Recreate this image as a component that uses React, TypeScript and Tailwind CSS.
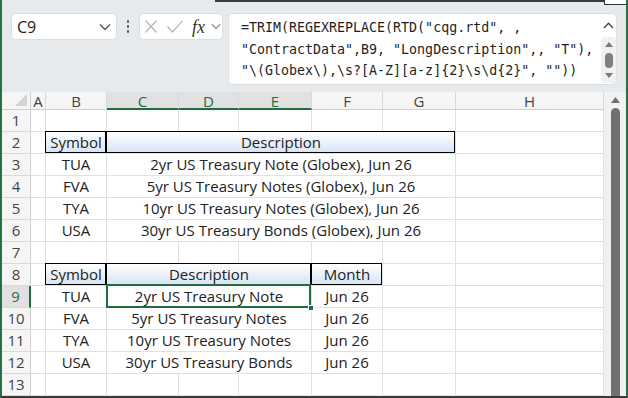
import React from "react"

const cellFont = "font-['Open_Sans',sans-serif]"

const colLetters = ["A", "B", "C", "D", "E", "F", "G", "H"]
const selectedCols = ["C", "D", "E"]

const table1 = [
  ["TUA", "2yr US Treasury Note (Globex), Jun 26"],
  ["FVA", "5yr US Treasury Notes (Globex), Jun 26"],
  ["TYA", "10yr US Treasury Notes (Globex), Jun 26"],
  ["USA", "30yr US Treasury Bonds (Globex), Jun 26"],
]

const table2 = [
  ["TUA", "2yr US Treasury Note", "Jun 26"],
  ["FVA", "5yr US Treasury Notes", "Jun 26"],
  ["TYA", "10yr US Treasury Notes", "Jun 26"],
  ["USA", "30yr US Treasury Bonds", "Jun 26"],
]

function Cell({ children, className = "" }: { children?: React.ReactNode; className?: string }) {
  return (
    <div
      className={`h-[22px] border-r border-b border-[#e1e1e1] bg-white flex items-center justify-center text-[15px] text-[#222] whitespace-nowrap ${className}`}
    >
      {children}
    </div>
  )
}

function HeadCell({ children, className = "" }: { children?: React.ReactNode; className?: string }) {
  return (
    <div
      className={`relative h-[22px] border-r border-b border-[#e1e1e1] bg-linear-to-b from-white to-[#d6e3f4] flex items-center justify-center text-[15px] text-[#222] ${className}`}
    >
      <div className="absolute -left-px -top-px right-0 bottom-0 border border-black pointer-events-none" />
      {children}
    </div>
  )
}

function RowNum({ n }: { n: number }) {
  const sel = n === 9
  return (
    <div
      className={`h-[22px] border-b border-[#dadada] flex items-center justify-center text-[15px] ${
        sel
          ? "bg-[#e1e1e1] text-[#1e6e42] border-r-2 border-r-[#1e6e42]"
          : "bg-[#f5f5f5] text-[#444] border-r border-r-[#cfcfcf]"
      }`}
    >
      {n}
    </div>
  )
}

function Empty({ count }: { count: number }) {
  return (
    <>
      {Array.from({ length: count }, (_, i) => (
        <Cell key={i} />
      ))}
    </>
  )
}

function NameBox() {
  return (
    <div className="w-[106px] h-[27px] bg-white rounded-[5px] border border-[#dcdfe2] flex items-center justify-between pl-[5px] pr-[5px]">
      <span className="font-['Open_Sans',sans-serif] text-[16px] text-[#222]">C9</span>
      <svg width="12" height="8" viewBox="0 0 12 8">
        <polyline points="1,1.5 6,6.5 11,1.5" fill="none" stroke="#555" strokeWidth="1.3" />
      </svg>
    </div>
  )
}

function FormulaButtons() {
  return (
    <div className="w-[84px] h-[27px] bg-white rounded-[5px] border border-[#dcdfe2] flex items-center pl-[5px]">
      <svg width="12" height="13" viewBox="0 0 12 13">
        <line x1="0.5" y1="0.5" x2="11.5" y2="12.5" stroke="#b5b5b5" strokeWidth="1.2" />
        <line x1="11.5" y1="0.5" x2="0.5" y2="12.5" stroke="#b5b5b5" strokeWidth="1.2" />
      </svg>
      <svg className="ml-[10px]" width="16" height="13" viewBox="0 0 16 13">
        <polyline points="0.5,6.5 5.5,12 15.5,0.8" fill="none" stroke="#b5b5b5" strokeWidth="1.2" />
      </svg>
      <span className="ml-[9px] font-['Liberation_Serif',serif] italic text-[18px] leading-none text-[#333] w-[15px]">
        fx
      </span>
      <svg className="ml-[4px]" width="10" height="7" viewBox="0 0 10 7">
        <polyline points="0.8,1.2 5,5.5 9.2,1.2" fill="none" stroke="#888" strokeWidth="1.1" />
      </svg>
    </div>
  )
}

function FormulaBox() {
  const lines = [
    '=TRIM(REGEXREPLACE(RTD("cqg.rtd", ,',
    '"ContractData",B9, "LongDescription",, "T"),',
    '"\\(Globex\\),\\s?[A-Z][a-z]{2}\\s\\d{2}", ""))',
  ]
  return (
    <div className="ml-[5px] w-[389px] h-[72px] bg-white rounded-[5px] border border-[#dcdfe2] flex">
      <div className="flex-1 pl-[12px] pt-[3px] font-['DejaVu_Sans_Mono',monospace] text-[13.3px] leading-[21.7px] text-[#1f1f1f]">
        {lines.map((l, i) => (
          <div key={i} className="whitespace-pre">
            {l}
          </div>
        ))}
      </div>
      <div className="w-[15px] flex flex-col items-center">
        <svg className="mt-[8px]" width="11" height="7" viewBox="0 0 11 7">
          <polyline points="1,6 5.5,1.3 10,6" fill="none" stroke="#444" strokeWidth="1.3" />
        </svg>
        <div className="mt-[8px] w-[15px] h-[46px] rounded-[4px] bg-[#f1f1f1] flex flex-col items-center">
          <svg className="mt-[5px]" width="8" height="5" viewBox="0 0 8 5">
            <polygon points="4,0 8,5 0,5" fill="#7a7a7a" />
          </svg>
          <div className="mt-[6px] w-[8px] h-[15px] rounded-full bg-[#808080]" />
          <svg className="mt-[5px]" width="8" height="5" viewBox="0 0 8 5">
            <polygon points="0,0 8,0 4,5" fill="#7a7a7a" />
          </svg>
        </div>
      </div>
    </div>
  )
}

export default function App() {
  return (
    <div className="w-[628px] h-[398px] overflow-hidden border-x-2 border-x-[#217346] border-b-2 border-b-[#3a3a3a] bg-[#e7eaed] flex flex-col">
      {/* formula bar */}
      <div className="h-[92px] shrink-0 flex flex-col">
        <div className="h-[5px] flex">
          <div className="w-[213px]" />
          <div className="flex-1 border-t-2 border-[#3a3a3a]" />
          <div className="w-[22px] h-[5px] bg-white border-l border-b border-[#333]" />
        </div>
        <div className="flex items-start pl-[9px] pt-[8px]">
          <NameBox />
          <div className="w-[22px] h-[27px] flex flex-col items-center justify-center gap-[2.5px]">
            <span className="w-[2.5px] h-[2.5px] rounded-full bg-[#555]" />
            <span className="w-[2.5px] h-[2.5px] rounded-full bg-[#555]" />
            <span className="w-[2.5px] h-[2.5px] rounded-full bg-[#555]" />
          </div>
          <FormulaButtons />
          <FormulaBox />
        </div>
      </div>

      {/* sheet */}
      <div className="flex flex-1">
        <div className={`w-[602px] grid grid-cols-[29px_15px_61px_72px_60px_73px_71px_73px_148px] auto-rows-min ${cellFont}`}>
          {/* column header row */}
          <div className="h-[18px] bg-[#f5f5f5] border-r border-b border-[#cfcfcf] flex items-end justify-end pr-[3px] pb-[3px]">
            <svg width="12" height="12" viewBox="0 0 12 12">
              <polygon points="12,0 12,12 0,12" fill="#d2d2d2" />
            </svg>
          </div>
          {colLetters.map((c) => {
            const sel = selectedCols.includes(c)
            return (
              <div
                key={c}
                className={`h-[18px] border-r border-r-[#d8d8d8] flex items-center justify-center pt-[2px] text-[15px] leading-none ${
                  sel
                    ? "bg-[#e1e1e1] text-[#1e6e42] border-b-2 border-b-[#1e6e42]"
                    : "bg-[#f5f5f5] text-[#444] border-b border-b-[#cfcfcf]"
                }`}
              >
                {c}
              </div>
            )
          })}

          {/* row 1 */}
          <RowNum n={1} />
          <Empty count={8} />

          {/* row 2 */}
          <RowNum n={2} />
          <Cell />
          <HeadCell>Symbol</HeadCell>
          <HeadCell className="col-span-5">Description</HeadCell>
          <Cell />

          {table1.map(([sym, desc], i) => (
            <React.Fragment key={sym}>
              <RowNum n={3 + i} />
              <Cell />
              <Cell>{sym}</Cell>
              <Cell className="col-span-5">{desc}</Cell>
              <Cell />
            </React.Fragment>
          ))}

          {/* row 7 */}
          <RowNum n={7} />
          <Empty count={8} />

          {/* row 8 */}
          <RowNum n={8} />
          <Cell />
          <HeadCell>Symbol</HeadCell>
          <HeadCell className="col-span-3">Description</HeadCell>
          <HeadCell>Month</HeadCell>
          <Cell />
          <Cell />

          {table2.map(([sym, desc, month], i) => (
            <React.Fragment key={sym}>
              <RowNum n={9 + i} />
              <Cell />
              <Cell>{sym}</Cell>
              {i === 0 ? (
                <Cell className="col-span-3 relative">
                  {desc}
                  <div className="absolute -left-px -top-[2px] right-0 -bottom-px border-2 border-[#1e6e42] pointer-events-none" />
                  <div className="absolute -right-[3px] -bottom-[4px] w-[6px] h-[6px] bg-[#1e6e42] border border-white" />
                </Cell>
              ) : (
                <Cell className="col-span-3">{desc}</Cell>
              )}
              <Cell>{month}</Cell>
              <Cell />
              <Cell />
            </React.Fragment>
          ))}

          {/* row 13 */}
          <RowNum n={13} />
          <Empty count={8} />
        </div>

        {/* vertical scrollbar */}
        <div className="flex-1 bg-[#eff1f3] flex flex-col items-center">
          <svg className="mt-[5px]" width="9" height="6" viewBox="0 0 9 6">
            <polygon points="4.5,0 9,6 0,6" fill="#707070" />
          </svg>
          <div className="mt-[5px] w-[9px] flex-1 rounded-t-[5px] bg-[#707070]" />
        </div>
      </div>
    </div>
  )
}
